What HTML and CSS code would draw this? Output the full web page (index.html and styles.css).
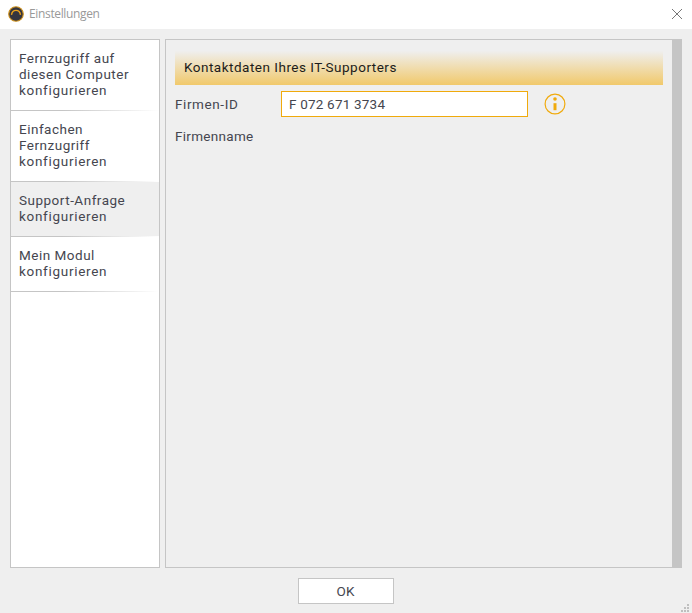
FILE: index.html
```html
<!DOCTYPE html>
<html lang="de">
<head>
<meta charset="utf-8">
<title>Einstellungen</title>
<link rel="stylesheet" href="styles.css">
</head>
<body>
<header class="titlebar">
  <svg class="logo" width="16" height="16" viewBox="0 0 16 16"><circle cx="8" cy="8" r="7.3" fill="#34353f" stroke="#d0921c" stroke-width="1.1"/><path d="M3.5 8.8C4.3 2.9 11.7 2.9 12.5 8.8" fill="none" stroke="#e9a11c" stroke-width="1.4"/></svg>
  <span class="title">Einstellungen</span>
  <svg class="close" width="10" height="10" viewBox="0 0 10 10"><path d="M0 0L10 10M10 0L0 10" stroke="#777" stroke-width="1"/></svg>
</header>
<main class="body">
  <nav class="sidebar">
    <a class="item">Fernzugriff auf<br>diesen Computer<br><span class="verb">konfigurieren</span></a>
    <a class="item">Einfachen<br>Fernzugriff<br><span class="verb">konfigurieren</span></a>
    <a class="item active">Support-Anfrage<br><span class="verb">konfigurieren</span></a>
    <a class="item">Mein Modul<br><span class="verb">konfigurieren</span></a>
  </nav>
  <section class="panel">
    <h1 class="heading">Kontaktdaten Ihres IT-Supporters</h1>
    <div class="row">
      <span class="label id">Firmen-ID</span>
      <div class="field">F 072 671 3734</div>
      <svg class="info" width="22" height="22" viewBox="0 0 22 22"><circle cx="11" cy="11" r="9.9" fill="none" stroke="#f0aa0c" stroke-width="1.2"/><circle cx="11" cy="6" r="1.8" fill="#f0aa0c"/><path d="M9.5 10.2h3v7h-3z" fill="#f0aa0c"/></svg>
    </div>
    <div class="row"><span class="label">Firmenname</span></div>
  </section>
</main>
<footer class="footer">
  <button class="ok">OK</button>
  <svg class="grip" width="8" height="8" viewBox="0 0 8 8" fill="#bfbfbf"><path d="M6 0h2v2H6zM3 3h2v2H3zM6 3h2v2H6zM0 6h2v2H0zM3 6h2v2H3zM6 6h2v2H6z"/></svg>
</footer>
</body>
</html>
```
FILE: styles.css
```css
* { box-sizing: border-box; }
body {
  margin: 0;
  width: 692px;
  height: 613px;
  overflow: hidden;
  display: flex;
  flex-direction: column;
  background: #efefef;
  color: #45464f;
  font: 13.5px/16px Roboto, sans-serif;
  letter-spacing: 0.5px;
}
.titlebar {
  height: 29px;
  flex: none;
  display: flex;
  align-items: center;
  padding: 0 10px 2px 8px;
  background: #fff;
}
.title {
  flex: 1;
  margin-left: 5px;
  padding-top: 1px;
  color: #999;
  font: 12px/16px "Open Sans", sans-serif;
  letter-spacing: -0.35px;
}
.body {
  display: flex;
  gap: 5px;
  height: 529px;
  margin: 10px 10px 0;
}
.sidebar {
  width: 150px;
  border: 1px solid #c5c5c5;
  background: #fff;
}
.item {
  display: block;
  padding: 10px 8px 13px;
  white-space: nowrap;
  background: linear-gradient(90deg, #c5c5c5 35%, #fff) bottom / 100% 1px no-repeat;
}
.verb { letter-spacing: 0.7px; }
.active { background-color: #efefef; }
.panel {
  width: 517px;
  padding: 9px;
  border: 1px solid #c5c5c5;
  border-right: 10px solid #c5c5c5;
}
.heading {
  height: 36px;
  margin: 0;
  padding: 1px 9px 0;
  font: inherit;
  line-height: 34px;
  color: #1c1c1c;
  background: linear-gradient(#efefef 5%, #f1c96b);
}
.row {
  display: flex;
  align-items: center;
  height: 26px;
  margin-top: 6px;
}
.label {
  width: 106px;
  letter-spacing: 0.3px;
}
.id { letter-spacing: 0.6px; }
.field {
  width: 247px;
  height: 26px;
  padding: 0 7px;
  border: 1px solid #f0aa0c;
  background: #fff;
  line-height: 25px;
  letter-spacing: 0.2px;
}
.info { margin-left: 16px; }
.footer {
  flex: 1;
  display: grid;
  grid-template-columns: 298px 96px 1fr;
  padding-top: 10px;
}
.ok {
  grid-column: 2;
  height: 26px;
  padding: 0 1px 0 0;
  border: 1px solid #c5c5c5;
  background: #fff;
  color: inherit;
  font: inherit;
}
.grip {
  justify-self: end;
  align-self: end;
  margin: 0 3px 1px 0;
}
```
